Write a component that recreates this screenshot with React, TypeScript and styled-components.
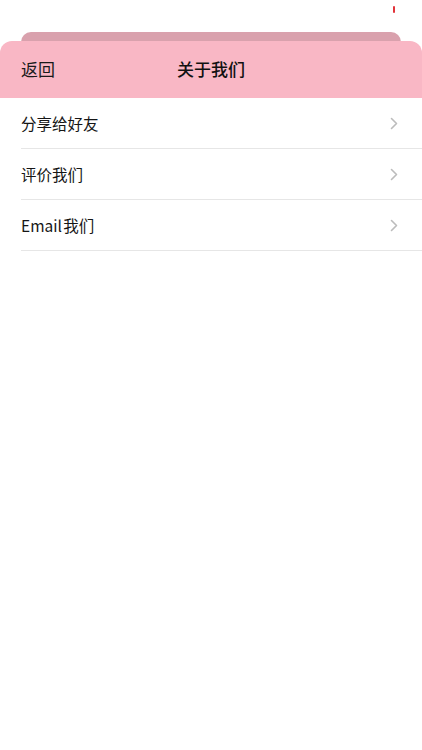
import styled, { createGlobalStyle } from "styled-components";

const GlobalStyle = createGlobalStyle`
  html, body {
    margin: 0;
    padding: 0;
    background: #ffffff;
  }
  body {
    font-family: "Noto Sans CJK SC", "Noto Sans", "Liberation Sans", sans-serif;
    color: #111111;
  }
`;

const Page = styled.div`
  width: 422px;
  min-height: 750px;
  background: #ffffff;
`;

const StatusBar = styled.div`
  height: 32px;
  display: flex;
  justify-content: flex-end;
  align-items: flex-start;
  padding: 6px 27px 0 0;
  box-sizing: border-box;
`;

const Tick = styled.span`
  width: 2px;
  height: 7px;
  background: #e2333a;
  border-radius: 1px;
`;

const BackCard = styled.div`
  height: 20px;
  margin: 0 21px;
  background: #d9a1ad;
  border-radius: 10px 10px 0 0;
`;

const Header = styled.header`
  position: relative;
  margin-top: -11px;
  height: 57px;
  background: #f9b7c5;
  border-radius: 12px 12px 0 0;
  display: grid;
  grid-template-columns: 1fr auto 1fr;
  align-items: center;
  padding: 0 21px 2px;
  box-sizing: border-box;
`;

const BackButton = styled.button`
  justify-self: start;
  border: none;
  background: none;
  padding: 0;
  font-family: inherit;
  font-size: 17px;
  color: #1a1a1a;
  cursor: pointer;
`;

const Title = styled.h1`
  margin: 0;
  font-size: 17px;
  font-weight: 500;
  color: #111111;
`;

const List = styled.ul`
  list-style: none;
  margin: 0;
  padding: 0;
`;

const Row = styled.li`
  height: 50px;
  margin-left: 21px;
  padding-right: 24px;
  border-bottom: 1px solid #e6e6e6;
  display: flex;
  align-items: center;
  justify-content: space-between;
  font-size: 15.5px;
  word-spacing: -2px;
  color: #161616;
`;

const Chevron = () => (
  <svg width="8" height="13" viewBox="0 0 8 13" fill="none">
    <polyline
      points="1.5,1.5 6.5,6.5 1.5,11.5"
      stroke="#bcbcbc"
      strokeWidth="1.6"
      strokeLinecap="round"
      strokeLinejoin="round"
    />
  </svg>
);

const items = ["分享给好友", "评价我们", "Email 我们"];

export default function App() {
  return (
    <Page>
      <GlobalStyle />
      <StatusBar>
        <Tick />
      </StatusBar>
      <BackCard />
      <Header>
        <BackButton>返回</BackButton>
        <Title>关于我们</Title>
        <span />
      </Header>
      <List>
        {items.map((label) => (
          <Row key={label}>
            <span>{label}</span>
            <Chevron />
          </Row>
        ))}
      </List>
    </Page>
  );
}
